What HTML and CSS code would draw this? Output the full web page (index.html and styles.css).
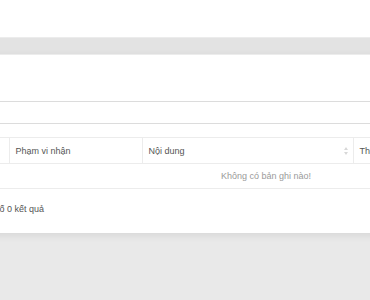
FILE: index.html
```html
<!DOCTYPE html>
<html lang="vi">
<head>
    <meta charset="UTF-8">
    <title>Danh sách thông báo</title>
    <link rel="stylesheet" href="styles.css">
</head>
<body>
    <div class="topbar"></div>
    <div class="strip"></div>
    <div class="card">
        <div class="search"></div>
        <table class="grid">
            <thead>
                <tr>
                    <th class="col-stt"></th>
                    <th class="col-scope">Phạm vi nhận</th>
                    <th class="col-content">Nội dung <span class="sort"></span></th>
                    <th class="col-time">Thời gian</th>
                </tr>
            </thead>
            <tbody>
                <tr>
                    <td colspan="4" class="empty">Không có bản ghi nào!</td>
                </tr>
            </tbody>
        </table>
        <div class="summary">Tổng số 0 kết quả</div>
    </div>
</body>
</html>
```

FILE: styles.css
```css
html, body {
    margin: 0;
    height: 100%;
}
body {
    font-family: 'Liberation Sans', Arial, sans-serif;
    font-size: 9px;
    color: #555;
    background: #e9e9e9;
    overflow: hidden;
}
.topbar {
    height: 37px;
    background: #fff;
}
.strip {
    height: 16px;
    background: #e3e3e3;
    border-top: 1px solid #ececec;
    border-bottom: 1px solid #f2f2f2;
}
.card {
    width: 600px;
    margin-left: -50px;
    height: 178px;
    box-sizing: border-box;
    padding: 46px 10px 0;
    background: #fff;
    box-shadow: 0 2px 8px rgba(0, 0, 0, 0.09);
}
.search {
    height: 21px;
    border: 1px solid #dcdcdc;
    border-radius: 2px;
    margin-bottom: 13px;
}
.grid {
    width: 100%;
    border-collapse: collapse;
    table-layout: fixed;
}
.grid th {
    box-sizing: border-box;
    height: 26px;
    padding: 0 6px;
    text-align: left;
    font-weight: normal;
    color: #555;
    border-top: 1px solid #ececec;
    border-bottom: 1px solid #ececec;
    border-left: 1px solid #ececec;
    white-space: nowrap;
    overflow: hidden;
}
.grid th:first-child {
    border-left: none;
}
.col-stt { width: 49px; }
.col-scope { width: 133px; }
.col-content {
    width: 211px;
    position: relative;
}
.sort {
    position: absolute;
    right: 4px;
    top: 9px;
    width: 5px;
    height: 8px;
}
.sort::before, .sort::after {
    content: "";
    position: absolute;
    left: 0;
    border-left: 2.5px solid transparent;
    border-right: 2.5px solid transparent;
}
.sort::before {
    top: 0;
    border-bottom: 3px solid #d8d8d8;
}
.sort::after {
    bottom: 0;
    border-top: 3px solid #d8d8d8;
}
.grid td {
    box-sizing: border-box;
    height: 25px;
    padding: 0;
    border-bottom: 1px solid #ececec;
}
.empty {
    text-align: center;
    color: #9a9a9a;
    padding-left: 32px !important;
}
.summary {
    padding: 14px 0 0 12px;
    line-height: 12px;
    color: #555;
}
```
